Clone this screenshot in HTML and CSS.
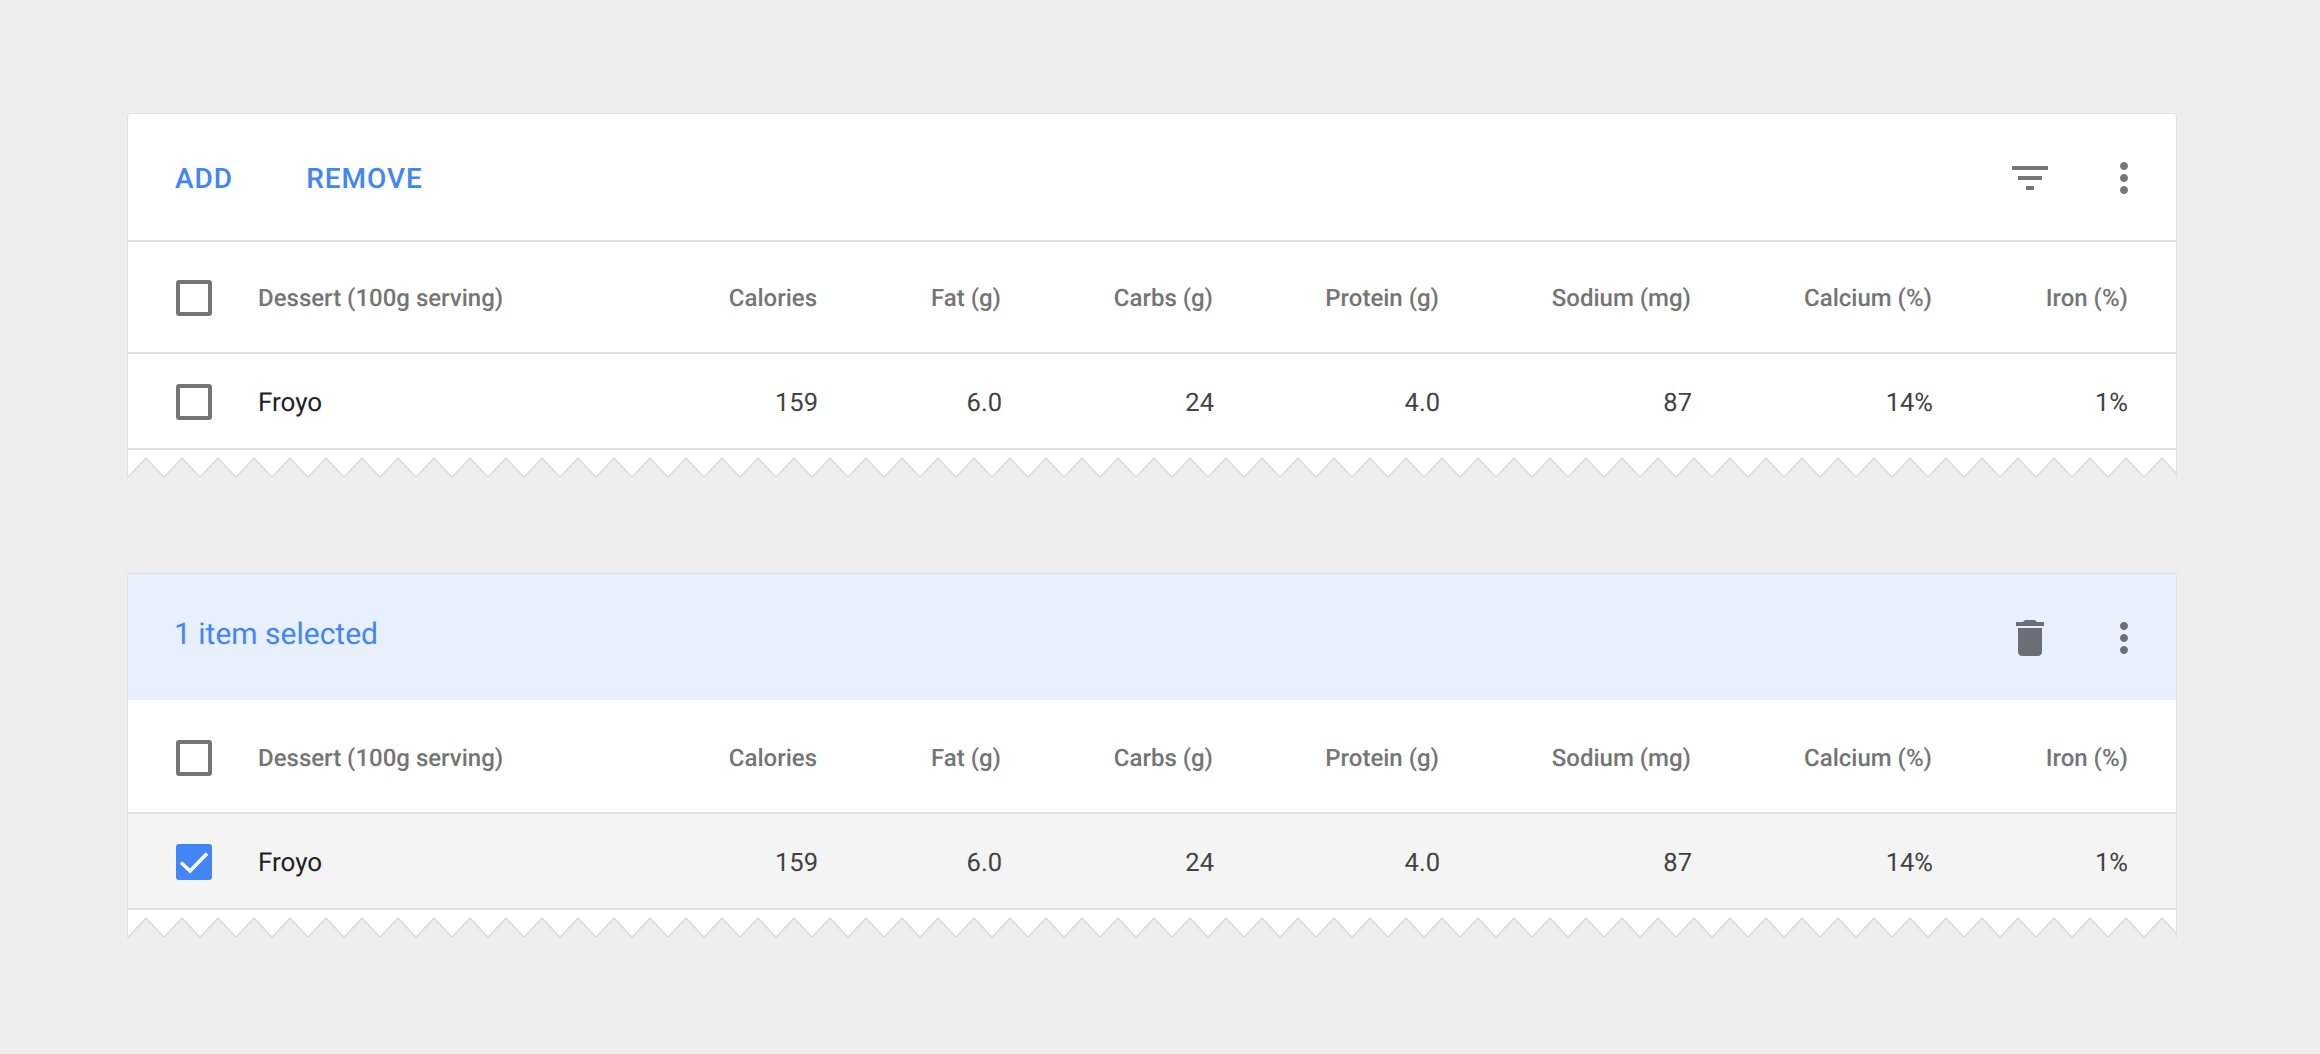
FILE: index.html
```html
<!DOCTYPE html>
<html lang="en">
<head>
<meta charset="utf-8">
<title>Data tables</title>
<link rel="stylesheet" href="styles.css">
</head>
<body>
<svg class="defs" width="0" height="0" aria-hidden="true">
  <defs>
    <pattern id="zigzag" width="36" height="28" patternUnits="userSpaceOnUse" x="0" y="0">
      <path class="zig-fill" d="M0 27 L18 8 L36 27 V0 H0 Z"/>
      <path class="zig-line" d="M0 27 L18 8 L36 27"/>
    </pattern>
  </defs>
</svg>

<section class="card">
  <div class="toolbar">
    <div class="actions">
      <button class="text-btn">ADD</button>
      <button class="text-btn">REMOVE</button>
    </div>
    <div class="icons">
      <svg class="icon" viewBox="0 0 24 24"><path d="M10 18h4v-2h-4v2zM3 6v2h18V6H3zm3 7h12v-2H6v2z"/></svg>
      <svg class="icon" viewBox="0 0 24 24"><path d="M12 8c1.100 0 2-.9 2-2s-.9-2-2-2-2 .9-2 2 .9 2 2 2zm0 2c-1.100 0-2 .9-2 2s.9 2 2 2 2-.9 2-2-.9-2-2-2zm0 6c-1.100 0-2 .9-2 2s.9 2 2 2 2-.9 2-2-.9-2-2-2z"/></svg>
    </div>
  </div>
  <div class="row head">
    <span class="check"></span>
    <span class="name">Dessert (100g serving)</span>
    <span>Calories</span><span>Fat (g)</span><span>Carbs (g)</span><span>Protein (g)</span><span>Sodium (mg)</span><span>Calcium (%)</span><span>Iron (%)</span>
  </div>
  <div class="row body">
    <span class="check"></span>
    <span class="name">Froyo</span>
    <span class="num">159</span><span class="num">6.0</span><span class="num">24</span><span class="num">4.0</span><span class="num">87</span><span class="num">14%</span><span class="num last">1%</span>
  </div>
  <svg class="tear" width="100%" height="28"><rect width="100%" height="28" fill="url(#zigzag)"/></svg>
</section>

<section class="card">
  <div class="toolbar selected">
    <div class="title">1 item selected</div>
    <div class="icons">
      <svg class="icon" viewBox="0 0 24 24"><path d="M6 19c0 1.100.9 2 2 2h8c1.100 0 2-.9 2-2V7H6v12zM19 4h-3.500l-1-1h-5l-1 1H5v2h14V4z"/></svg>
      <svg class="icon" viewBox="0 0 24 24"><path d="M12 8c1.100 0 2-.9 2-2s-.9-2-2-2-2 .9-2 2 .9 2 2 2zm0 2c-1.100 0-2 .9-2 2s.9 2 2 2 2-.9 2-2-.9-2-2-2zm0 6c-1.100 0-2 .9-2 2s.9 2 2 2 2-.9 2-2-.9-2-2-2z"/></svg>
    </div>
  </div>
  <div class="row head">
    <span class="check"></span>
    <span class="name">Dessert (100g serving)</span>
    <span>Calories</span><span>Fat (g)</span><span>Carbs (g)</span><span>Protein (g)</span><span>Sodium (mg)</span><span>Calcium (%)</span><span>Iron (%)</span>
  </div>
  <div class="row body active">
    <span class="check on"><svg viewBox="0 0 36 36"><path d="M5 18.500 L14 27 L31 9.500" /></svg></span>
    <span class="name">Froyo</span>
    <span class="num">159</span><span class="num">6.0</span><span class="num">24</span><span class="num">4.0</span><span class="num">87</span><span class="num">14%</span><span class="num last">1%</span>
  </div>
  <svg class="tear" width="100%" height="28"><rect width="100%" height="28" fill="url(#zigzag)"/></svg>
</section>
</body>
</html>
```

FILE: styles.css
```css
* { box-sizing: border-box; }
html, body { margin: 0; height: 100%; }
body {
  background: #eeeeee;
  font-family: Roboto, "Liberation Sans", sans-serif;
  text-rendering: geometricPrecision;
  padding: 113px 143px 0 127px;
  display: flex;
  flex-direction: column;
  gap: 95px;
  overflow: hidden;
}
.defs { position: absolute; }
.zig-fill { fill: #ffffff; }
.zig-line { fill: none; stroke: #d4d4d4; stroke-width: 1.2; }

.card {
  width: 2050px;
  border: 1px solid #e0e0e0;
  border-bottom: 0;
  border-radius: 4px 4px 0 0;
  display: flex;
  flex-direction: column;
}
.toolbar {
  height: 128px;
  background: #ffffff;
  border-bottom: 2px solid #e0e0e0;
  display: flex;
  align-items: center;
  justify-content: space-between;
  padding: 2px 28px 0 47px;
  border-radius: 3px 3px 0 0;
}
.toolbar.selected {
  background: #e8effd;
  border-bottom-color: #ffffff;
}
.actions { display: flex; gap: 73px; }
.text-btn {
  border: 0;
  background: none;
  padding: 0;
  font: 500 28px Roboto, sans-serif;
  text-rendering: geometricPrecision;
  letter-spacing: 1px;
  color: #4285f4;
}
.title {
  font-size: 30px;
  color: #4285f4;
  padding-bottom: 8px;
  margin-left: -1px;
}
.icons { display: flex; gap: 46px; }
.icon { width: 48px; height: 48px; fill: #757575; display: block; }
.selected .icon { fill: #6b6e76; }

.row {
  display: grid;
  grid-template-columns: 36px 46px 391px 168px 184px 212px 226px 252px 241px 196px;
  padding: 2px 47px 0 48px;
  align-items: center;
  background: #ffffff;
  border-bottom: 2px solid #e0e0e0;
  text-align: right;
}
.name { text-align: left; grid-column: 3; }
.head {
  height: 112px;
  font-size: 24px;
  font-weight: 500;
  color: #757575;
}
.body {
  height: 96px;
  font-size: 26px;
  color: #212121;
}
.body .name, .num { padding-top: 2px; }
.num { color: #424242; font-size: 25.5px; margin-right: -1px; }
.num.last { margin-right: 0; }
.active { background: #f4f4f4; }
.check {
  grid-column: 1;
  width: 36px;
  height: 36px;
  border: 4px solid #757575;
  border-radius: 3px;
  display: block;
}
.check.on {
  background: #4285f4;
  border: 0;
}
.check svg { display: block; width: 36px; height: 36px; fill: none; stroke: #ffffff; stroke-width: 3.5; }
.tear { display: block; height: 28px; }
```
